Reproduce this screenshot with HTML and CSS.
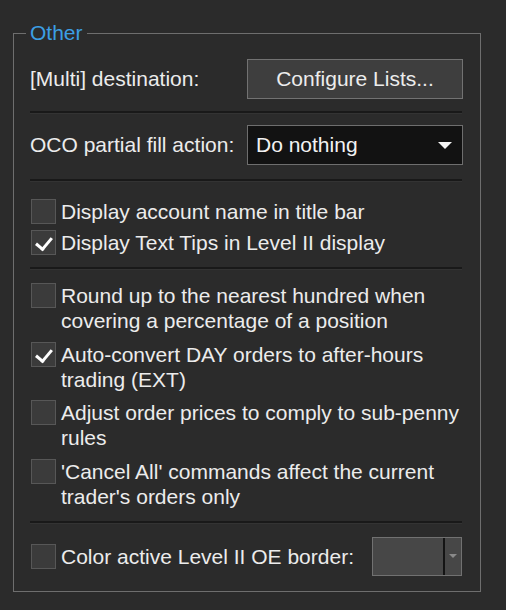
FILE: index.html
```html
<!DOCTYPE html>
<html lang="en">
<head>
  <meta charset="UTF-8">
  <title>Other options</title>
  <link rel="stylesheet" href="styles.css">
</head>
<body>

  <fieldset class="group">
    <legend>Other</legend>

    <div class="field-row">
      <span class="label">[Multi] destination:</span>
      <button class="btn">Configure Lists...</button>
    </div>

    <div class="sep"></div>

    <div class="field-row">
      <span class="label">OCO partial fill action:</span>
      <div class="select">
        <span>Do nothing</span>
        <span class="arrow"></span>
      </div>
    </div>

    <div class="sep sep-a"></div>

    <div class="checks tight">
      <label class="check"><span class="box"></span><span class="text">Display account name in title bar</span></label>
      <label class="check"><span class="box on"></span><span class="text">Display Text Tips in Level II display</span></label>
    </div>

    <div class="sep sep-b"></div>

    <div class="checks">
      <label class="check"><span class="box"></span><span class="text">Round up to the nearest hundred when<br>covering a percentage of a position</span></label>
      <label class="check"><span class="box on"></span><span class="text">Auto-convert DAY orders to after-hours<br>trading (EXT)</span></label>
      <label class="check"><span class="box"></span><span class="text">Adjust order prices to comply to sub-penny<br>rules</span></label>
      <label class="check"><span class="box"></span><span class="text">'Cancel All' commands affect the current<br>trader's orders only</span></label>
    </div>

    <div class="sep sep-b"></div>

    <div class="color-row">
      <label class="check"><span class="box"></span><span class="text">Color active Level II OE border:</span></label>
      <div class="color-combo">
        <span class="swatch"></span>
        <span class="mini-arrow"></span>
      </div>
    </div>
  </fieldset>

</body>
</html>
```

FILE: styles.css
```css
* { margin: 0; padding: 0; box-sizing: border-box; }
html, body {
  width: 100%;
  height: 100%;
  background: #2b2b2b;
}
body {
  padding-top: 21px;
  font-family: 'Liberation Sans', Arial, sans-serif;
  font-size: 21px;
  color: #ececec;
}
.group {
  margin-left: 13px;
  width: 468px;
  border: 1px solid #6e6e6e;
  padding: 14px 17px 15px 16px;
  display: flex;
  flex-direction: column;
}
.group legend {
  color: #3c9fe4;
  font-size: 21px;
  line-height: 24px;
  padding: 0 4px;
  margin-left: -4px;
}
.field-row {
  display: grid;
  grid-template-columns: 217px 216px;
  align-items: center;
  height: 40px;
  white-space: nowrap;
}
.btn {
  height: 40px;
  background: #3e3e3e;
  border: 1px solid #727272;
  color: #ececec;
  font-family: inherit;
  font-size: 21px;
}
.select {
  height: 40px;
  background: #121212;
  border: 1px solid #6e6e6e;
  display: flex;
  align-items: center;
  justify-content: space-between;
  padding: 0 10px 0 8px;
  color: #f2f2f2;
}
.arrow {
  width: 0;
  height: 0;
  border-left: 7px solid transparent;
  border-right: 7px solid transparent;
  border-top: 7px solid #f4f4f4;
}
.sep {
  height: 3px;
  margin: 12px 1px 11px 0;
  border-top: 2px solid #191919;
  border-bottom: 1px solid #333;
}
.sep-a { margin: 14px 1px 17px 0; }
.sep-b { margin: 12px 1px 13px 0; }
.checks {
  display: flex;
  flex-direction: column;
  gap: 8.5px;
}
.checks.tight { gap: 6px; }
.check {
  display: flex;
  align-items: flex-start;
  gap: 5px;
  line-height: 25px;
  padding-left: 1px;
}
.check .text { white-space: nowrap; }
.box {
  flex: none;
  width: 25px;
  height: 25px;
  background: #3b3b3b;
  border: 1px solid #575757;
  position: relative;
}
.box.on::after {
  content: "";
  position: absolute;
  left: 7px;
  top: 3px;
  width: 7px;
  height: 13px;
  border-right: 3px solid #fff;
  border-bottom: 3px solid #fff;
  transform: rotate(40deg);
}
.color-row {
  display: flex;
  align-items: center;
  justify-content: space-between;
  height: 39px;
}
.color-combo {
  width: 90px;
  height: 39px;
  background: #474747;
  border: 1px solid #717171;
  display: flex;
  margin-right: 1px;
}
.swatch {
  flex: 1;
  border-right: 2px solid #141414;
}
.mini-arrow {
  width: 16px;
  display: flex;
  align-items: center;
  justify-content: center;
}
.mini-arrow::after {
  content: "";
  border-left: 4px solid transparent;
  border-right: 4px solid transparent;
  border-top: 4px solid #8a8a8a;
}
```
